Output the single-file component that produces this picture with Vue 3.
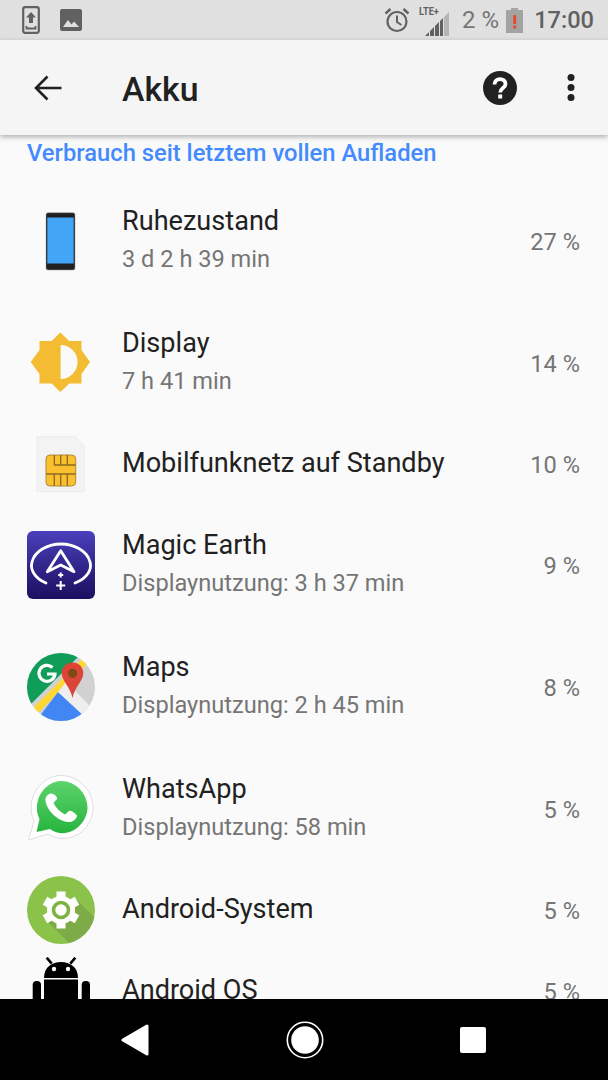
<script setup>
const rows = [
  { icon: 'phone', title: 'Ruhezustand', sub: '3 d 2 h 39 min', pct: '27 %' },
  { icon: 'display', title: 'Display', sub: '7 h 41 min', pct: '14 %' },
  { icon: 'sim', title: 'Mobilfunknetz auf Standby', pct: '10 %' },
  { icon: 'magic', title: 'Magic Earth', sub: 'Displaynutzung: 3 h 37 min', pct: '9 %' },
  { icon: 'maps', title: 'Maps', sub: 'Displaynutzung: 2 h 45 min', pct: '8 %' },
  { icon: 'whatsapp', title: 'WhatsApp', sub: 'Displaynutzung: 58 min', pct: '5 %' },
  { icon: 'system', title: 'Android-System', pct: '5 %' },
  { icon: 'android', title: 'Android OS', pct: '5 %' },
]
</script>

<template>
  <div class="screen">
    <div class="status">
      <div class="status-left">
        <svg width="18" height="28" viewBox="0 0 18 28">
          <rect x="1.2" y="1.2" width="15.6" height="25.6" rx="2" fill="none" stroke="#616161" stroke-width="2.2" />
          <path d="M9 6 L14 11.5 H11 V17 H7 V11.5 H4 Z" fill="#616161" />
          <path d="M4.5 20 V22.5 H13.5 V20" fill="none" stroke="#616161" stroke-width="1.8" />
        </svg>
        <svg width="22" height="22" viewBox="0 0 22 22">
          <rect width="22" height="22" rx="2" fill="#616161" />
          <path d="M3 18 L8 11 L11.5 15.5 L14 12.5 L19 18 Z" fill="#e0e0e0" />
        </svg>
      </div>
      <div class="status-right">
        <svg class="alarm" width="26" height="26" viewBox="0 0 26 26" fill="none" stroke="#616161">
          <circle cx="13" cy="14.5" r="9.5" stroke-width="2.2" />
          <path d="M13 8.5 V15 L17.5 18" stroke-width="2" />
          <path d="M1.5 6.5 L6.5 2 M24.5 6.5 L19.5 2" stroke-width="2.4" />
        </svg>
        <div class="signal">
          <span class="lte">LTE+</span>
          <svg width="24" height="24" viewBox="0 0 24 24">
            <defs><clipPath id="sig"><path d="M24 0 V24 H0 Z" /></clipPath></defs>
            <g clip-path="url(#sig)">
              <rect x="0" y="0" width="4" height="24" fill="#616161" />
              <rect x="5" y="0" width="4" height="24" fill="#616161" />
              <rect x="10" y="0" width="4" height="24" fill="#616161" />
              <rect x="15" y="0" width="3" height="24" fill="#616161" />
              <rect x="19" y="0" width="5" height="24" fill="#b5b5b5" />
            </g>
          </svg>
        </div>
        <span class="batt-text">2 %</span>
        <svg width="17" height="25" viewBox="0 0 17 25">
          <path d="M5 0 H12 V2 H17 V25 H0 V2 H5 Z" fill="#a3a3a3" />
          <rect x="7.2" y="7" width="3" height="9" rx="1" fill="#e8452c" />
          <rect x="7.2" y="17.5" width="3" height="3" fill="#e8452c" />
        </svg>
        <span class="clock">17:00</span>
      </div>
    </div>

    <header class="toolbar">
      <svg class="back" width="28" height="26" viewBox="0 0 28 26" fill="none" stroke="#212121" stroke-width="2.6">
        <path d="M27.5 13 H2 M13.5 1.5 L2 13 L13.5 24.5" />
      </svg>
      <h1 class="title">Akku</h1>
      <svg class="help" width="34" height="34" viewBox="0 0 34 34">
        <circle cx="17" cy="17" r="17" fill="#212121" />
        <path d="M11.5 13.5 C11.5 6.5 22.5 6.5 22.5 13 C22.5 17 17.2 17 17.2 21.5" fill="none" stroke="#fff" stroke-width="3.8" />
        <rect x="15.2" y="23.5" width="4" height="4" fill="#fff" />
      </svg>
      <svg class="more" width="8" height="27" viewBox="0 0 8 27" fill="#212121">
        <circle cx="4" cy="3.5" r="3.5" /><circle cx="4" cy="13.5" r="3.5" /><circle cx="4" cy="23.5" r="3.5" />
      </svg>
    </header>

    <main class="content">
      <div class="section">Verbrauch seit letztem vollen Aufladen</div>
      <div v-for="r in rows" :key="r.title" class="row" :class="{ two: r.sub }">
        <div class="icon">
          <svg v-if="r.icon === 'phone'" width="68" height="68" viewBox="0 0 68 68">
            <rect x="19" y="5.7" width="29" height="57.3" rx="2" fill="#212121" stroke="#9e9e9e" stroke-width=".5" />
            <rect x="20.3" y="10.5" width="26.4" height="46" fill="#42a5f5" />
          </svg>
          <svg v-else-if="r.icon === 'display'" width="68" height="68" viewBox="0 0 68 68">
            <path d="M33.3 3.5 L42.3 12 H54.5 V21 L63 33 L54.5 45 V54.5 H42.3 L33.3 63 L24.7 54.5 H12.5 V45 L3.7 33 L12.5 21 V12 H24.7 Z" fill="#f4bc33" />
            <path d="M33.6 16 A17 17 0 0 1 33.6 50 Z" fill="#fafafa" />
          </svg>
          <svg v-else-if="r.icon === 'sim'" width="68" height="68" viewBox="0 0 68 68">
            <path d="M10 6.7 H48 L57 15.7 V61.7 H10 Z" fill="#f3f3f3" stroke="#ececec" />
            <rect x="19" y="25" width="29.7" height="31" rx="4" fill="#fbc02d" stroke="#b08a3c" />
            <path d="M27.3 25 V35 M33.7 25 V35 M40.3 25 V35 M27 35 H48.7 M19 44 H48.7 M27.3 44 V56 M33.7 44 V56 M40.3 44 V56" fill="none" stroke="#8a6a24" stroke-width="1.3" />
          </svg>
          <svg v-else-if="r.icon === 'magic'" width="68" height="68" viewBox="0 0 68 68">
            <defs>
              <linearGradient id="mg" x1="0" y1="0" x2="0" y2="1">
                <stop offset="0" stop-color="#4a3fbb" /><stop offset="1" stop-color="#1a1060" />
              </linearGradient>
            </defs>
            <rect width="68" height="68" rx="6" fill="url(#mg)" />
            <path d="M19 52 C7 47 3 38 5 31 C8 19 22 13 34 13 C46 13 60 19 63 31 C65 38 61 47 48 52" fill="none" stroke="#fff" stroke-width="2.8" stroke-linecap="round" />
            <path d="M33.7 19.7 L47 40.7 L33.7 34 L20.3 40.7 Z" fill="none" stroke="#fff" stroke-width="2.8" stroke-linejoin="round" />
            <path d="M33.7 41.5 V46.5 M31.2 44 H36.2 M33.7 50 V59 M29.2 54.5 H38.2" stroke="#fff" stroke-width="2" />
          </svg>
          <svg v-else-if="r.icon === 'maps'" width="68" height="68" viewBox="0 0 68 68">
            <defs><clipPath id="mc"><circle cx="34" cy="34" r="34" /></clipPath></defs>
            <g clip-path="url(#mc)">
              <rect width="68" height="68" fill="#d1d1d1" />
              <path d="M0 0 H55 L0 55 Z" fill="#0f9d58" />
              <path d="M-4 65 L57 4 L62 9 L1 70 Z" fill="#fdd835" />
              <path d="M9 68 L31 39 L64 68 Z" fill="#4285f4" />
              <path d="M31 39 L39 29 L68 58 L60 66 Z" fill="#eeeeee" />
            </g>
            <path d="M25.5 14.5 A8 8 0 1 0 28 21 H20" fill="none" stroke="#fff" stroke-width="3.2" />
            <path d="M45.5 9.5 C38 9.5 34.7 15.5 34.7 20 C34.7 28 43 33 45.5 45 C48 33 56.3 28 56.3 20 C56.3 15.5 53 9.5 45.5 9.5 Z" fill="#db4437" />
            <circle cx="45.6" cy="20.3" r="4.6" fill="#7e4a14" />
          </svg>
          <svg v-else-if="r.icon === 'whatsapp'" width="68" height="68" viewBox="0 0 68 68">
            <defs>
              <linearGradient id="wg" x1="0" y1="0" x2="0" y2="1">
                <stop offset="0" stop-color="#5dd36c" /><stop offset="1" stop-color="#27b43e" />
              </linearGradient>
            </defs>
            <path d="M1.5 65 L7 46 C-3 24 14 0.5 34 0.5 C51 0.5 66 15 66 33 C66 55 42 72 21 59 Z" fill="#fff" stroke="#dedede" />
            <path d="M9.5 57 L12.5 44 C4 26 18 6 34 6 C48 6 60.5 18 60.5 32.5 C60.5 50 40 66 23 54 Z" fill="url(#wg)" />
            <path d="M24 18.5 C20 19 18 22.5 18.5 26 C20 36 31 46 41 47 C45 47.5 49 45 50 41 C50 39.5 44 35 42 36 L38 39.5 C33 37 29 33 26.5 28 L30 24 C31 22.5 27 18 24 18.5 Z" fill="#fff" />
          </svg>
          <svg v-else-if="r.icon === 'system'" width="68" height="68" viewBox="0 0 68 68">
            <defs><clipPath id="sc"><circle cx="34" cy="34" r="34" /></clipPath></defs>
            <circle cx="34" cy="34" r="34" fill="#8bc34a" />
            <path d="M19 44 L43 68 L68 68 L68 42 L49 23 Z" fill="#7cab47" clip-path="url(#sc)" />
            <circle cx="34" cy="34" r="14" fill="#fff" />
            <path d="M34 15.5 V52.5 M18 24.75 L50 43.25 M18 43.25 L50 24.75" stroke="#fff" stroke-width="9" />
            <circle cx="34" cy="34" r="7.5" fill="#fff" stroke="#7cb342" stroke-width="3.6" />
          </svg>
          <svg v-else width="68" height="68" viewBox="0 0 68 68">
            <path d="M19.7 0.7 L24.7 6.7 M48.3 0.7 L43.3 6.7" stroke="#000" stroke-width="2.6" />
            <path d="M17 21 C17 10 25 5 34 5 C43 5 51 10 51 21 Z" fill="#000" />
            <circle cx="27" cy="12" r="2.2" fill="#fafafa" /><circle cx="41" cy="12" r="2.2" fill="#fafafa" />
            <rect x="17" y="22.5" width="34" height="46" fill="#000" />
            <rect x="5.7" y="24" width="8.3" height="30" rx="4" fill="#000" />
            <rect x="54.7" y="24" width="8.3" height="30" rx="4" fill="#000" />
          </svg>
        </div>
        <div class="text">
          <div class="row-title">{{ r.title }}</div>
          <div v-if="r.sub" class="row-sub">{{ r.sub }}</div>
        </div>
        <div class="pct">{{ r.pct }}</div>
      </div>
    </main>

    <nav class="nav">
      <svg width="28" height="32" viewBox="0 0 28 32">
        <path d="M26 2 V30 L2 16 Z" fill="#fff" stroke="#fff" stroke-width="3" stroke-linejoin="round" />
      </svg>
      <svg width="38" height="38" viewBox="0 0 38 38">
        <circle cx="19" cy="19" r="17.7" fill="none" stroke="#fff" stroke-width="1.6" />
        <circle cx="19" cy="19" r="13.8" fill="#fff" />
      </svg>
      <div class="square"></div>
    </nav>
  </div>
</template>

<style scoped>
.screen {
  width: 608px;
  height: 1080px;
  display: flex;
  flex-direction: column;
  overflow: hidden;
  background: #fafafa;
  font-family: Roboto, sans-serif;
  color: #212121;
}
.status {
  height: 40px;
  flex: none;
  background: #e0e0e0;
  display: flex;
  align-items: center;
  justify-content: space-between;
  padding: 0 14px 0 22px;
  color: #616161;
}
.status-left { display: flex; align-items: center; gap: 20px; }
.status-right { display: flex; align-items: center; }
.alarm { margin-right: 10px; }
.signal { position: relative; width: 30px; height: 26px; margin-right: 12px; }
.signal svg { position: absolute; right: 1px; bottom: -3px; }
.lte { position: absolute; left: -1px; top: -3px; font-size: 11.5px; font-weight: 700; transform: scaleX(.8); transform-origin: left; white-space: nowrap; }
.batt-text { font-size: 24px; margin-right: 7px; color: #757575; }
.clock { font-size: 23.6px; font-weight: 500; margin-left: 11px; }
.toolbar {
  height: 95px;
  flex: none;
  background: #f5f5f5;
  box-shadow: 0 2px 5px rgba(0, 0, 0, .3);
  display: flex;
  align-items: center;
  position: relative;
  z-index: 1;
}
.back { margin-left: 34px; margin-right: 60px; }
.title { margin: 0; padding-top: 3px; font-size: 33.8px; font-weight: 500; flex: 1; }
.help { margin-right: 50px; }
.more { margin-right: 33px; }
.content { flex: 1; min-height: 0; overflow: hidden; }
.section {
  height: 45px;
  padding: 4px 0 0 27px;
  box-sizing: border-box;
  font-size: 23.75px;
  line-height: 28px;
  font-weight: 500;
  color: #448aff;
}
.row {
  height: 80px;
  display: flex;
  align-items: center;
  padding: 0 28px 0 27px;
}
.row.two { height: 122px; }
.row:last-child { margin-top: 1px; }
.icon { width: 68px; height: 68px; flex: none; margin-right: 27px; }
.icon svg { display: block; }
.text { flex: 1; min-width: 0; padding-bottom: 2px; }
.two .text { padding-bottom: 5px; }
.row-title { font-size: 27.1px; line-height: 36px; color: #212121; }
.row-sub { font-size: 23.6px; line-height: 32px; margin-top: 4px; color: #757575; }
.pct { font-size: 23.6px; color: #757575; padding-top: 2px; }
.nav {
  height: 81px;
  flex: none;
  background: #000;
  display: flex;
  align-items: center;
  justify-content: space-between;
  padding: 0 122px 0 121px;
  position: relative;
}
.square { width: 26px; height: 26px; border-radius: 2px; background: #fff; }
</style>
